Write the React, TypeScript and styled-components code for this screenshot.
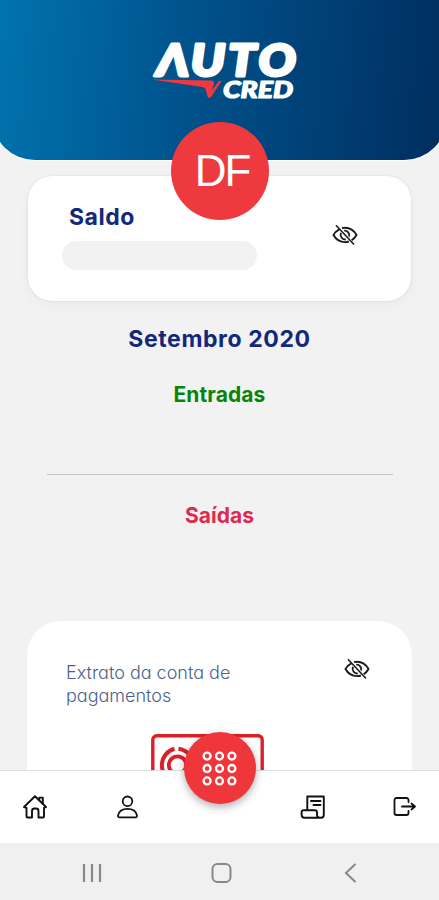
import React from "react";
import styled, { createGlobalStyle } from "styled-components";

const GlobalStyle = createGlobalStyle`
  * { box-sizing: border-box; }
  body { margin: 0; background: #f2f2f2; }
`;

const Screen = styled.div`
  position: relative;
  display: flex;
  flex-direction: column;
  width: 439px;
  height: 900px;
  overflow: hidden;
  background: #f2f2f2;
  font-family: Inter, "Open Sans", sans-serif;
`;

const Content = styled.main`
  flex: 1;
  min-height: 0;
  display: flex;
  flex-direction: column;
  overflow: hidden;
`;

const Header = styled.header`
  position: relative;
  flex: none;
  height: 160px;
  margin: 0 -8px;
  padding-top: 36px;
  display: flex;
  justify-content: center;
  align-items: flex-start;
  border-radius: 0 0 43px 43px;
  background: linear-gradient(95deg, #0072ad 3%, #00528c 43%, #003062 96%);
  box-shadow: 0 1px 1px #fff;
`;

const Avatar = styled.div`
  position: absolute;
  left: 179px;
  top: 122px;
  width: 98px;
  height: 98px;
  border-radius: 50%;
  display: flex;
  align-items: center;
  justify-content: center;
  padding: 0 0 0 4px;
  background: #ee3a3f;
  color: #fff;
  font: 44px/1 "Liberation Sans", Arial, sans-serif;
  letter-spacing: -2.2px;
`;

const BalanceCard = styled.section`
  flex: none;
  display: flex;
  justify-content: space-between;
  width: 383px;
  height: 125px;
  margin: 16px 0 0 28px;
  padding: 26px 53px 0 34px;
  border-radius: 24px;
  background: #fff;
  box-shadow: 0 0 2px rgba(0, 0, 0, 0.12), 0 4px 12px rgba(0, 0, 0, 0.04);
`;

const BalanceTitle = styled.h2`
  margin: 0 0 9px 7px;
  padding-top: 1px;
  color: #12287a;
  font-size: 23px;
  line-height: 29px;
  font-weight: 650;
  letter-spacing: 0.5px;
`;

const HiddenAmount = styled.div`
  width: 195px;
  height: 29px;
  border-radius: 15px;
  background: #f2f2f2;
`;

const EyeSlot = styled.div<{ $top: number }>`
  margin-top: ${(p) => p.$top}px;
  line-height: 0;
`;

const Heading = styled.h3<{ $color: string; $size: number; $gap: number; $spacing: number }>`
  flex: none;
  margin: ${(p) => p.$gap}px 0 0;
  text-align: center;
  color: ${(p) => p.$color};
  font-size: ${(p) => p.$size}px;
  line-height: 28px;
  font-weight: 650;
  letter-spacing: ${(p) => p.$spacing}px;
`;

const Divider = styled.hr`
  flex: none;
  width: 346px;
  height: 1px;
  margin: 65px 0 0 47px;
  border: 0;
  background: #c6c6c6;
`;

const StatementCard = styled.section`
  flex: none;
  width: 385px;
  height: 200px;
  margin: 91px 0 0 27px;
  padding: 40px 42px 0 39px;
  border-radius: 34px;
  background: #fff;
`;

const StatementRow = styled.div`
  display: flex;
  justify-content: space-between;
  height: 46px;
`;

const StatementTitle = styled.p`
  width: 190px;
  margin: 0;
  color: #4c5f8e;
  font-size: 18px;
  line-height: 23px;
  font-weight: 350;
  letter-spacing: 0;
  font-feature-settings: "cv11";
`;

const Illustration = styled.div`
  margin: 27px 0 0 85px;
  line-height: 0;
`;

const TabBar = styled.nav`
  position: relative;
  flex: none;
  display: flex;
  justify-content: space-between;
  align-items: center;
  height: 73px;
  padding: 0 22px 1px;
  border-top: 1px solid #dedede;
  background: #fff;
`;

const TabItem = styled.div<{ $push?: number }>`
  line-height: 0;
  margin-right: ${(p) => p.$push ?? 0}px;
`;

const MenuButton = styled.div`
  position: absolute;
  left: 184px;
  top: -39px;
  width: 72px;
  height: 72px;
  border-radius: 50%;
  display: flex;
  align-items: center;
  justify-content: center;
  padding: 0 1px 0 0;
  background: #ee363b;
  box-shadow: 0 3px 8px rgba(0, 0, 0, 0.32);
`;

const SystemBar = styled.footer`
  flex: none;
  display: flex;
  justify-content: space-between;
  align-items: center;
  height: 57px;
  padding: 2px 77px 0 77px;
  background: #f0f0f0;
`;

const logoFont = { fontFamily: "Lato", fontWeight: 900, fontStyle: "italic" } as const;

function Logo() {
  return (
    <svg width="152" height="70" viewBox="144 36 152 70" overflow="visible" role="img" aria-label="AUTO CRED">
      <g fill="#fff" stroke="#fff" strokeLinejoin="round" {...logoFont}>
        <text transform="translate(156.500 75.500) scale(1.120 1)" x="0 30.500 64 91" y="0" fontSize="44" strokeWidth="3">ΛUTO</text>
        <text x="223" y="97.500" fontSize="23" strokeWidth="1.200" textLength="70" lengthAdjust="spacingAndGlyphs">CRED</text>
      </g>
      <path d="M152 79.500 L211 80.500 Q215 81 214 84 L211.500 91 L218.500 81.500 L222 80.500 L211 97 Q208.500 99 207.500 96.500 L205.500 89 Q205 87.500 202 87 Z" fill="#ee3a3f" />
    </svg>
  );
}

function EyeOff() {
  return (
    <svg width="26" height="22" viewBox="0 0 26 22" fill="none" stroke="#1c1c1c" strokeWidth="1.900">
      <path d="M7.300 5.300C4.600 6.700 2.600 8.700 1.500 11c2.500 4.600 6.500 7.100 11.500 7.100 1.400 0 2.700-.2 3.900-.6M10 4.200c1-.3 2-.5 3-.5 5 0 9 2.700 11.500 7.300-1.200 2.200-2.800 4-4.800 5.300" />
      <path d="M9 8.800a4.700 4.700 0 0 0 4.800 6.600M12.200 6.600a4.700 4.700 0 0 1 4.900 6" />
      <path d="M4 1.200 22 20.500" strokeWidth="1.600" />
    </svg>
  );
}

function CashDrawing() {
  return (
    <svg width="113" height="70" viewBox="0 0 113 70" fill="none" stroke="#dc2027">
      <rect x="1.800" y="1.800" width="109.400" height="66" rx="4" strokeWidth="3.400" />
      <path d="M23.500 14.800A17 17 0 0 0 23 47.500M27.500 14.800A17 17 0 0 1 30 48" strokeWidth="4" />
      <circle cx="26.500" cy="31" r="8.700" strokeWidth="3.800" />
    </svg>
  );
}

function HomeIcon() {
  return (
    <svg width="26" height="26" viewBox="0 0 26 26" fill="none" stroke="#111" strokeWidth="1.900" strokeLinejoin="round" strokeLinecap="round">
      <path d="M2 13 13 2.300 24 13l-2 .8V22.500a1 1 0 0 1-1 1h-4.500V17a2.500 2.500 0 0 0-2.500-2.500h-1.500A2.500 2.500 0 0 0 10 17v6.500H5.500a1 1 0 0 1-1-1v-8.700z" />
      <path d="M17.300 5.800V3.600h3.500v6" />
    </svg>
  );
}

function PersonIcon() {
  return (
    <svg width="24" height="26" viewBox="0 0 24 26" fill="none" stroke="#111" strokeWidth="1.800" strokeLinejoin="round">
      <circle cx="12.500" cy="7.300" r="4.800" />
      <path d="M3 21.500C4 17 7.500 14.900 12.500 14.900s8.500 2.100 9.500 6.600c.2 1-.4 1.900-1.500 1.900h-16c-1.100 0-1.700-.9-1.500-1.900z" />
    </svg>
  );
}

function ReceiptIcon() {
  return (
    <svg width="26" height="26" viewBox="0 0 26 26" fill="none" stroke="#111" strokeWidth="1.900" strokeLinejoin="round">
      <path d="M7.300 15.500V2.500h16.500v18.500a2.700 2.700 0 0 1-2.700 2.700H4.500A3 3 0 0 1 1.600 20.700v-2.500a2 2 0 0 1 2-2H15a2 2 0 0 1 2 2v2.500c0 1.600 1 3 2.800 3" />
      <path d="M11 7h9.500M13.500 11h7" strokeLinecap="round" />
    </svg>
  );
}

function ExitIcon() {
  return (
    <svg width="24" height="22" viewBox="0 0 24 22" fill="none" stroke="#111" strokeWidth="1.800" strokeLinecap="round" strokeLinejoin="round">
      <path d="M15.500 6V4a2 2 0 0 0-2-2H3.500a2 2 0 0 0-2 2v13a2 2 0 0 0 2 2h10a2 2 0 0 0 2-2v-2" />
      <path d="M9 10.500h13M18.500 7.500l3.500 3-3.500 3" />
    </svg>
  );
}

function GridIcon() {
  const steps = [5, 17.2, 29.4];
  return (
    <svg width="35" height="35" viewBox="0 0 34.400 34.400" fill="none" stroke="#fff" strokeWidth="2.300">
      {steps.map((y) => steps.map((x) => <circle key={`${x}-${y}`} cx={x} cy={y} r="3.400" />))}
    </svg>
  );
}

export default function App() {
  return (
    <Screen>
      <GlobalStyle />
      <Content>
        <Header>
          <Logo />
          <Avatar>DF</Avatar>
        </Header>
        <BalanceCard>
          <div>
            <BalanceTitle>Saldo</BalanceTitle>
            <HiddenAmount />
          </div>
          <EyeSlot $top={22}>
            <EyeOff />
          </EyeSlot>
        </BalanceCard>
        <Heading $color="#12287a" $size={23} $gap={24} $spacing={0.6}>Setembro 2020</Heading>
        <Heading $color="#078407" $size={21} $gap={28} $spacing={0.1}>Entradas</Heading>
        <Divider />
        <Heading $color="#dc2a50" $size={21} $gap={27} $spacing={0}>Saídas</Heading>
        <StatementCard>
          <StatementRow>
            <StatementTitle>Extrato da conta de pagamentos</StatementTitle>
            <EyeSlot $top={-3}>
              <EyeOff />
            </EyeSlot>
          </StatementRow>
          <Illustration>
            <CashDrawing />
          </Illustration>
        </StatementCard>
      </Content>
      <TabBar>
        <TabItem><HomeIcon /></TabItem>
        <TabItem $push={94}><PersonIcon /></TabItem>
        <TabItem><ReceiptIcon /></TabItem>
        <TabItem><ExitIcon /></TabItem>
        <MenuButton><GridIcon /></MenuButton>
      </TabBar>
      <SystemBar>
        <svg width="30" height="24" viewBox="0 0 30 24" stroke="#888" strokeWidth="2.200">
          <path d="M7 3v18M15 3v18M23 3v18" />
        </svg>
        <svg width="24" height="24" viewBox="0 0 24 24" fill="none" stroke="#888" strokeWidth="2">
          <rect x="1.500" y="3" width="18" height="18" rx="5" />
        </svg>
        <svg width="24" height="24" viewBox="0 0 24 24" fill="none" stroke="#888" strokeWidth="2">
          <path d="m17.500 3-9.500 9 9.500 9" />
        </svg>
      </SystemBar>
    </Screen>
  );
}
